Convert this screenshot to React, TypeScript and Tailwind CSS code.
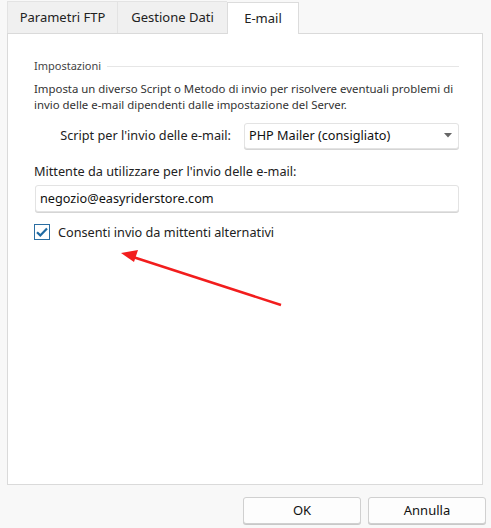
const font = { fontFamily: '"Noto Sans", "Open Sans", sans-serif' }

function Tab({ label, active, w }: { label: string; active?: boolean; w: string }) {
  return (
    <div
      className={`flex h-full items-center justify-center text-[13px] text-[#222] ${w} ${
        active
          ? 'relative z-10 -mb-px border-x border-t border-[#dcdcdc] bg-white'
          : 'mt-px border-l border-t border-[#e3e3e3] bg-[#f0f0f0]'
      }`}
    >
      {label}
    </div>
  )
}

export default function App() {
  return (
    <div className="relative h-[528px] w-[491px] overflow-hidden bg-[#f8f8f8] text-[#1b1b1b]" style={font}>
      <div className="ml-[7px] flex h-[33px] items-end pt-px">
        <Tab label="Parametri FTP" w="w-[110px]" />
        <Tab label="Gestione Dati" w="w-[110px]" />
        <Tab label="E-mail" w="w-[72px]" active />
      </div>

      <div className="ml-[7px] h-[452px] w-[476px] border border-[#dadada] bg-white pl-[26px] pr-[23px] pt-[24px]">
        <div className="flex items-center gap-[6px]">
          <span className="text-[11px] text-[#444]">Impostazioni</span>
          <div className="h-px flex-1 bg-[#e6e6e6]" />
        </div>

        <p className="mt-[6px] text-[11.4px] leading-[16px] text-[#333]">
          <span className="block whitespace-nowrap">Imposta un diverso Script o Metodo di invio per risolvere eventuali problemi di</span>
          <span className="block whitespace-nowrap">invio delle e-mail dipendenti dalle impostazione del Server.</span>
        </p>

        <div className="mt-[10px] flex items-center">
          <label className="w-[210px] pr-[13px] text-right text-[12.7px] text-[#222]">Script per l'invio delle e-mail:</label>
          <div className="flex h-[26px] flex-1 items-center justify-between rounded-[3px] border border-[#e3e3e3] bg-white pl-[4px] pr-[6px] shadow-[0_1px_0_#d5d5d5]">
            <span className="text-[12.7px] text-[#111]">PHP Mailer (consigliato)</span>
            <svg width="8" height="5" viewBox="0 0 8 5">
              <path d="M0 0 L8 0 L4 4.5 Z" fill="#666" />
            </svg>
          </div>
        </div>

        <div className="mt-[13px] text-[12.7px] text-[#222]">Mittente da utilizzare per l'invio delle e-mail:</div>

        <div className="mt-[4px] ml-px flex h-[27px] items-center rounded-[3px] border border-[#e3e3e3] bg-white pl-[4px] text-[12.7px] text-[#111] shadow-[0_1px_0_#d5d5d5]">
          negozio@easyriderstore.com
        </div>

        <div className="mt-[11px] flex items-center gap-[8px]">
          <div className="flex h-[16px] w-[16px] items-center justify-center border border-[#2b6ea2] bg-white">
            <svg width="12" height="10" viewBox="0 0 12 10">
              <path d="M1 5.2 L4.3 8.4 L11 1.4" fill="none" stroke="#1f6aa3" strokeWidth="2.2" />
            </svg>
          </div>
          <span className="text-[12.7px] text-[#222]">Consenti invio da mittenti alternativi</span>
        </div>
      </div>

      <div className="mt-[12px] flex justify-end gap-[7px] pr-[5px]">
        <button className="h-[27px] w-[118px] rounded-[3px] border border-[#d0d0d0] bg-[#fdfdfd] text-[13px] text-[#111] shadow-[0_1px_0_#c8c8c8]">OK</button>
        <button className="h-[27px] w-[118px] rounded-[3px] border border-[#d0d0d0] bg-[#fdfdfd] text-[13px] text-[#111] shadow-[0_1px_0_#c8c8c8]">Annulla</button>
      </div>

      <svg className="pointer-events-none absolute left-0 top-0" width="491" height="528">
        <line x1="281" y1="305" x2="133" y2="257" stroke="#f21d1d" strokeWidth="2.5" />
        <path d="M121 253 L138 250 L134 262 Z" fill="#f21d1d" />
      </svg>
    </div>
  )
}
